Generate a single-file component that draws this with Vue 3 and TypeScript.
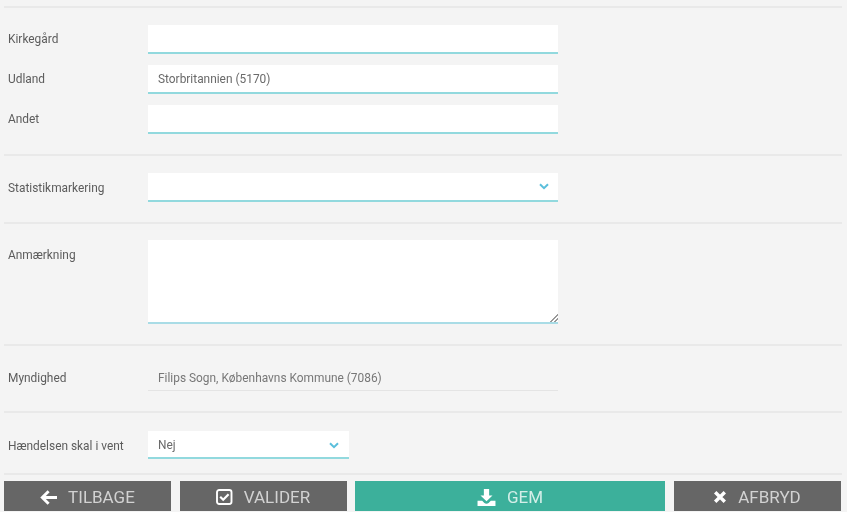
<script setup lang="ts">
const topRows = [
  { label: 'Kirkegård', value: '' },
  { label: 'Udland', value: 'Storbritannien (5170)' },
  { label: 'Andet', value: '' },
]
</script>

<template>
  <div class="page">
    <section class="group first">
      <div v-for="row in topRows" :key="row.label" class="row">
        <label class="label raised">{{ row.label }}</label>
        <input class="field" type="text" :value="row.value" />
      </div>
    </section>

    <section class="group">
      <div class="row">
        <label class="label">Statistikmarkering</label>
        <div class="field select">
          <svg class="chev" viewBox="0 0 10 7" width="10" height="7"><path d="M1 1.2 5 5.2 9 1.2" fill="none" stroke="#5bbfdc" stroke-width="2" /></svg>
        </div>
      </div>
    </section>

    <section class="group notes">
      <div class="row top">
        <label class="label lab-top">Anmærkning</label>
        <textarea class="field area"></textarea>
      </div>
    </section>

    <section class="group">
      <div class="row">
        <label class="label lowered">Myndighed</label>
        <div class="field readonly">Filips Sogn, Københavns Kommune (7086)</div>
      </div>
    </section>

    <section class="group last">
      <div class="row">
        <label class="label lowered">Hændelsen skal i vent</label>
        <div class="field select short">
          <span>Nej</span>
          <svg class="chev" viewBox="0 0 10 7" width="10" height="7"><path d="M1 1.2 5 5.2 9 1.2" fill="none" stroke="#5bbfdc" stroke-width="2" /></svg>
        </div>
      </div>
    </section>

    <div class="actions">
      <button class="btn" type="button">
        <svg viewBox="0 0 17 15" width="17" height="15"><path d="M8.6 1.2 2.3 7.5l6.3 6.3M2.8 7.5H17" fill="none" stroke="#fff" stroke-width="2.9" /></svg>
        <span>TILBAGE</span>
      </button>
      <button class="btn" type="button">
        <svg viewBox="0 0 17 16" width="17" height="16"><rect x="1" y="1" width="14.5" height="14" rx="2.2" fill="none" stroke="#fff" stroke-width="1.9" /><path d="M4.2 7.8 7.2 10.8 12.6 5.2" fill="none" stroke="#fff" stroke-width="2.2" /></svg>
        <span>VALIDER</span>
      </button>
      <button class="btn save" type="button">
        <svg viewBox="0 0 18 18" width="19" height="19"><path d="M6.5 1h5v6h3.2L9 12.6 3.3 7h3.2z" fill="#fff" /><path d="M0.5 12h4.4L7 14.2c1.1 1 2.9 1 4 0L13.1 12h4.4v5h-17z" fill="#fff" /></svg>
        <span>GEM</span>
      </button>
      <button class="btn" type="button">
        <svg viewBox="0 0 14 14" width="14" height="14"><path d="M2.2 2.2 11.8 11.8M11.8 2.2 2.2 11.8" fill="none" stroke="#fff" stroke-width="3.4" /></svg>
        <span>AFBRYD</span>
      </button>
    </div>
  </div>
</template>

<style>
html, body { margin: 0; background: #f4f4f4; overflow: hidden; }
</style>

<style scoped>
.page {
  width: 847px;
  height: 512px;
  box-sizing: border-box;
  padding: 6px 5px 0 4px;
  background: #f4f4f4;
  font-family: Roboto, "Liberation Sans", sans-serif;
  font-size: 11.9px;
  color: #5c5c5c;
  filter: blur(0.6px);
  overflow: hidden;
}
.group {
  display: flex;
  flex-direction: column;
  gap: 11px;
  padding: 17px 0 20px;
  border-top: 2px solid #e9e9e9;
}
.group.notes { padding: 16px 0 20px; }
.group.last { padding: 18px 0 14px; }
.row { display: flex; align-items: center; }
.row.top { align-items: flex-start; }
.label { width: 144px; padding-left: 4px; box-sizing: border-box; flex: none; }
.label.raised { padding-bottom: 2px; }
.label.lowered { padding-top: 2px; }
.lab-top { padding-top: 8px; }
.field {
  width: 410px;
  height: 29px;
  box-sizing: border-box;
  padding: 0 10px;
  background: #fff;
  border: 0;
  border-bottom: 2px solid #92d9de;
  border-radius: 0;
  outline: 0;
  font: inherit;
  color: #6a6a6a;
}
.select { display: flex; align-items: center; justify-content: space-between; padding-right: 9px; }
.select.short { width: 201px; height: 28px; padding: 2px 10px 0; }
.chev { margin-left: auto; }
.area { display: block; height: 84px; resize: vertical; padding: 8px 10px; border-bottom-color: #a9dce6; }
.area::-webkit-resizer {
  background: linear-gradient(135deg, transparent 45%, #999 45%, #999 58%, transparent 58%, transparent 72%, #999 72%, #999 85%, transparent 85%) right bottom / 8px 8px no-repeat;
}
.readonly {
  display: flex;
  align-items: center;
  height: 28px;
  padding-top: 2px;
  background: transparent;
  border-bottom: 1px solid #e4e4e4;
  color: #777;
}
.actions {
  display: grid;
  grid-template-columns: 167px 167px 310px 167px;
  gap: 8.5px;
  padding: 6px 0 0;
  border-top: 2px solid #e9e9e9;
}
.btn {
  height: 30px;
  box-sizing: border-box;
  display: flex;
  align-items: center;
  justify-content: center;
  gap: 11px;
  padding: 2px 0 0;
  border: 0;
  background: #666;
  color: #d2d2d2;
  font-family: inherit;
  font-size: 17px;
  font-weight: 400;
}
.save { background: #3cb09b; color: #d4eee8; }
</style>
